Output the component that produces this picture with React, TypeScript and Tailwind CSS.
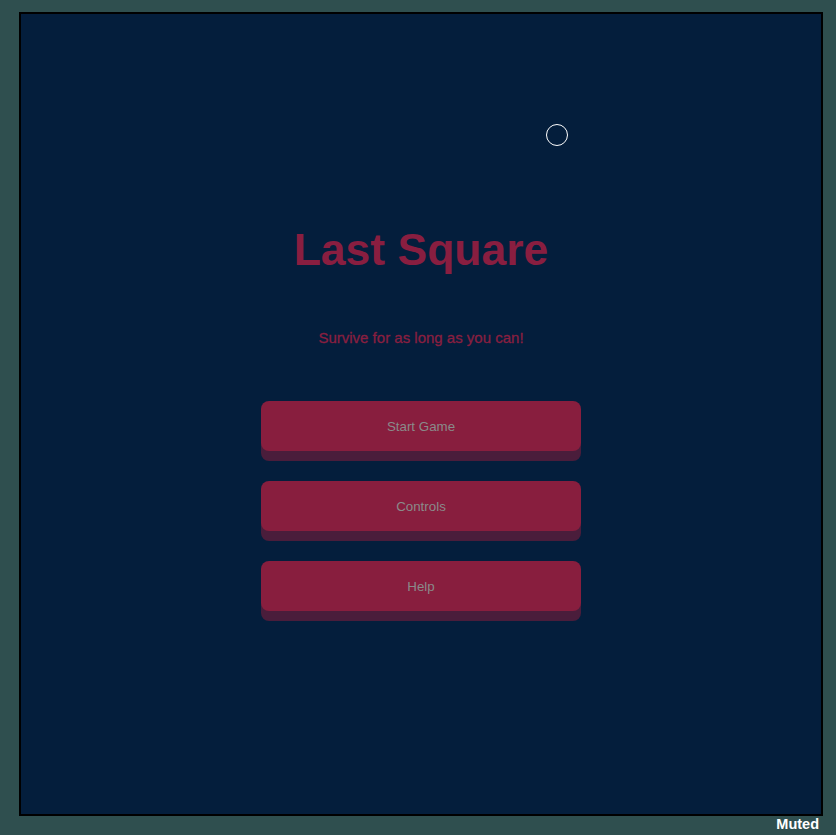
const buttons = ["Start Game", "Controls", "Help"];

export default function App() {
  return (
    <div
      className="w-full h-[835px] bg-[#2f4f4f] pl-[19px] pt-[12px]"
      style={{ fontFamily: '"Liberation Sans", Arial, sans-serif' }}
    >
      <div className="relative w-[804px] h-[804px] border-2 border-black bg-[#041e3c]">
        {/* cursor ring */}
        <div className="absolute left-[525px] top-[110px] w-[22px] h-[22px] rounded-full border border-white" />

        <div className="flex flex-col items-center pt-[214px]">
          <h1 className="text-[44.5px] leading-none font-bold text-[#891e40]">
            Last Square
          </h1>
          <p className="mt-[57px] text-[15px] leading-none text-[#891e40] [-webkit-text-stroke:0.3px_#891e40]">
            Survive for as long as you can!
          </p>
          <div className="mt-[56px] flex flex-col gap-[30px]">
            {buttons.map((label) => (
              <button
                key={label}
                type="button"
                className="w-[320px] h-[50px] pt-[2px] rounded-lg bg-[#881e3e] text-[13.33px] text-[#8a8a8a] shadow-[0_10px_0_#4a1d3b]"
              >
                {label}
              </button>
            ))}
          </div>
        </div>
      </div>
      <div className="w-[804px] pr-[4px] pt-[1px] text-right text-[14.5px] leading-none font-bold text-white">
        Muted
      </div>
    </div>
  );
}
